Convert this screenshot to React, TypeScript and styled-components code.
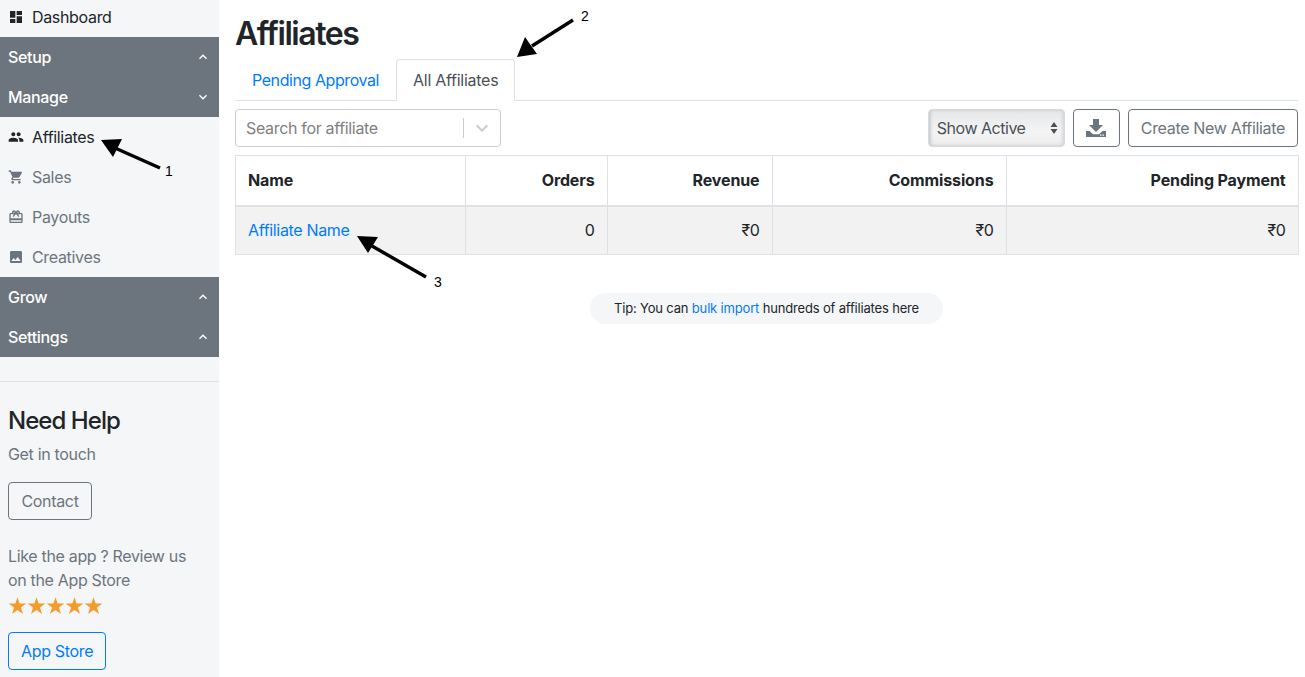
import React from "react";
import styled, { createGlobalStyle } from "styled-components";
import { MdDashboard, MdPeople, MdShoppingCart, MdRedeem, MdImage, MdKeyboardArrowUp, MdKeyboardArrowDown } from "react-icons/md";

const Global = createGlobalStyle`
  html, body { margin: 0; padding: 0; background: #fff; }
  body { font-family: Inter, "Liberation Sans", sans-serif; font-size: 16px; line-height: 24px; color: #212529; letter-spacing: -0.33px; overflow: hidden; }
  * { box-sizing: border-box; }
`;

const Page = styled.div`
  position: relative;
  display: flex;
  width: 1305px;
  height: 677px;
  overflow: hidden;
`;
const Sidebar = styled.aside`
  width: 219px;
  flex: none;
  background: #f5f6f8;
  display: flex;
  flex-direction: column;
`;
const NavItem = styled.div<{ $active?: boolean; $short?: boolean }>`
  height: ${p => (p.$short ? 37 : 40)}px;
  display: flex;
  align-items: center;
  gap: 8px;
  padding: ${p => (p.$short ? "0 0 3px 8px" : "0 0 0 8px")};
  color: ${p => (p.$active ? "#212529" : "#6c757d")};
  svg { flex: none; font-size: 16px; }
`;
const GroupHead = styled.div`
  height: 40px;
  background: #6c757d;
  color: #fff;
  font-weight: 500;
  display: flex;
  align-items: center;
  justify-content: space-between;
  padding: 0 8px;
  svg { font-size: 16px; }
`;
const Rule = styled.hr`
  border: 0;
  border-top: 1px solid #dfe1e4;
  margin: 24px 0 0;
`;
const Help = styled.div`
  padding: 24px 8px 0;
  color: #6c757d;
`;
const HelpTitle = styled.h4`
  margin: 0;
  font-size: 24px;
  line-height: 29px;
  font-weight: 500;
  color: #212529;
  letter-spacing: -0.95px;
`;
const HelpText = styled.p`
  margin: 7px 0 0;
`;
const OutlineButton = styled.button<{ $blue?: boolean }>`
  font: inherit;
  letter-spacing: inherit;
  height: 38px;
  padding: 0 12px;
  background: transparent;
  border: 1px solid ${p => (p.$blue ? "#007bff" : "#6c757d")};
  color: ${p => (p.$blue ? "#007bff" : "#6c757d")};
  border-radius: 4px;
  display: inline-flex;
  align-items: center;
  justify-content: center;
  flex: none;
`;
const ContactButton = styled(OutlineButton)`
  width: 84px;
  margin-top: 16px;
`;
const Review = styled.p`
  margin: 24px 0 0;
`;
const Stars = styled.div`
  display: flex;
  color: #f49c2b;
  margin: 4px 0 17px;
  svg { display: block; }
`;
const Main = styled.main`
  flex: 1;
  min-width: 0;
  padding: 0 7px 0 16px;
  display: flex;
  flex-direction: column;
`;
const Title = styled.h1`
  margin: 15px 0 0;
  font-size: 32px;
  line-height: 38px;
  font-weight: 600;
  letter-spacing: -1.45px;
`;
const Tabs = styled.div`
  display: flex;
  margin-top: 6px;
  height: 42px;
  border-bottom: 1px solid #dee2e6;
`;
const Tab = styled.div<{ $active?: boolean }>`
  height: 42px;
  padding: 0 16px;
  display: flex;
  align-items: center;
  border: 1px solid ${p => (p.$active ? "#dee2e6" : "transparent")};
  border-bottom-color: ${p => (p.$active ? "#fff" : "transparent")};
  border-radius: 4px 4px 0 0;
  color: ${p => (p.$active ? "#495057" : "#007bff")};
  letter-spacing: ${p => (p.$active ? "-0.27px" : "-0.42px")};
`;
const Toolbar = styled.div`
  display: flex;
  align-items: center;
  margin-top: 8px;
  height: 38px;
`;
const Search = styled.div`
  width: 266px;
  height: 38px;
  border: 1px solid #ccc;
  border-radius: 4px;
  display: flex;
  align-items: center;
  padding-left: 10px;
  color: #808080;
`;
const SearchText = styled.span`
  flex: 1;
`;
const SearchDivider = styled.span`
  width: 1px;
  height: 20px;
  background: #ccc;
`;
const SearchCaret = styled.span`
  width: 36px;
  display: flex;
  justify-content: center;
  color: #ccc;
  svg { font-size: 24px; }
`;
const Spacer = styled.div`
  flex: 1;
`;
const FilterSelect = styled.div`
  width: 137px;
  height: 38px;
  border: 1px solid #d8dbde;
  border-radius: 4px;
  background: linear-gradient(#e6e7e8, #f4f4f5 60%, #ececed);
  box-shadow: inset 2px 0 3px #c9cccf, inset -2px 0 3px #d6d8da;
  display: flex;
  align-items: center;
  justify-content: space-between;
  padding: 0 6px 0 8px;
  color: #495057;
  letter-spacing: -0.48px;
  margin-right: 8px;
`;
const IconButton = styled(OutlineButton)`
  width: 47px;
  padding: 0;
  margin-right: 8px;
`;
const Table = styled.table`
  border-collapse: collapse;
  margin-top: 8px;
  width: 1063px;
  table-layout: fixed;
`;
const Th = styled.th<{ $w: number; $left?: boolean }>`
  width: ${p => p.$w}px;
  height: 50px;
  border: 1px solid #dee2e6;
  border-bottom-width: 2px;
  padding: 0 12.5px 0 12px;
  text-align: ${p => (p.$left ? "left" : "right")};
  font-weight: 700;
  letter-spacing: -0.12px;
`;
const Td = styled.td<{ $left?: boolean }>`
  height: 49px;
  border: 1px solid #dee2e6;
  background: #f2f2f2;
  padding: 0 12.5px 0 12px;
  text-align: ${p => (p.$left ? "left" : "right")};
`;
const Link = styled.a`
  color: #007bff;
`;
const TipRow = styled.div`
  display: flex;
  justify-content: center;
  margin-top: 38px;
`;
const Tip = styled.div`
  width: 353px;
  height: 31px;
  border-radius: 16px;
  background: #f5f6f8;
  font-size: 13px;
  letter-spacing: -0.17px;
  padding-bottom: 1px;
  display: flex;
  align-items: center;
  justify-content: center;
  white-space: pre;
`;
const Annotations = styled.svg`
  position: absolute;
  inset: 0;
  pointer-events: none;
`;
const AnnotationNumber = styled.span<{ $x: number; $y: number }>`
  position: absolute;
  left: ${p => p.$x}px;
  top: ${p => p.$y}px;
  font-size: 14px;
  line-height: 16px;
  letter-spacing: 0;
  font-family: "Liberation Sans", Arial, sans-serif;
  color: #000;
`;

const Star = () => (
  <svg width="19" height="19" viewBox="0 0 24 24" fill="currentColor">
    <path d="M12 1.500l2.700 8h8.500l-6.900 5 2.700 8.200L12 17.600l-7 5.100 2.700-8.200-6.900-5h8.500z" />
  </svg>
);
const SortArrows = () => (
  <svg width="8" height="14" viewBox="0 0 8 14" fill="#495057">
    <path d="M4 1l3.500 5H.5zM4 13L.5 8h7z" />
  </svg>
);
const Arrow = ({ x1, y1, x2, y2, hx, hy, a, b }: { x1: number; y1: number; x2: number; y2: number; hx: number; hy: number; a: string; b: string }) => (
  <g>
    <line x1={x1} y1={y1} x2={x2} y2={y2} stroke="#000" strokeWidth="3.4" />
    <polygon points={`${hx},${hy} ${a} ${b}`} fill="#000" />
  </g>
);
const DownloadIcon = () => (
  <svg width="22" height="20" viewBox="0 0 22 20" fill="#6c757d">
    <path d="M8 1h6v6h4l-7 7-7-7h4z" />
    <path d="M1 13h3.500l3.500 3.200h6L17.500 13H21v6H1z" />
    <rect x="15" y="16.500" width="1.500" height="1.200" fill="#fff" />
    <rect x="17.500" y="16.500" width="1.500" height="1.200" fill="#fff" />
  </svg>
);

export default function App() {
  return (
    <Page>
      <Global />
      <Sidebar>
        <NavItem $active $short><MdDashboard />Dashboard</NavItem>
        <GroupHead>Setup<MdKeyboardArrowUp /></GroupHead>
        <GroupHead>Manage<MdKeyboardArrowDown /></GroupHead>
        <NavItem $active><MdPeople />Affiliates</NavItem>
        <NavItem><MdShoppingCart />Sales</NavItem>
        <NavItem><MdRedeem />Payouts</NavItem>
        <NavItem><MdImage />Creatives</NavItem>
        <GroupHead>Grow<MdKeyboardArrowUp /></GroupHead>
        <GroupHead>Settings<MdKeyboardArrowUp /></GroupHead>
        <Rule />
        <Help>
          <HelpTitle>Need Help</HelpTitle>
          <HelpText>Get in touch</HelpText>
          <ContactButton>Contact</ContactButton>
          <Review>Like the app ? Review us<br />on the App Store</Review>
          <Stars><Star /><Star /><Star /><Star /><Star /></Stars>
          <OutlineButton $blue>App Store</OutlineButton>
        </Help>
      </Sidebar>
      <Main>
        <Title>Affiliates</Title>
        <Tabs>
          <Tab>Pending Approval</Tab>
          <Tab $active>All Affiliates</Tab>
        </Tabs>
        <Toolbar>
          <Search>
            <SearchText>Search for affiliate</SearchText>
            <SearchDivider />
            <SearchCaret><MdKeyboardArrowDown /></SearchCaret>
          </Search>
          <Spacer />
          <FilterSelect>Show Active<SortArrows /></FilterSelect>
          <IconButton><DownloadIcon /></IconButton>
          <OutlineButton>Create New Affiliate</OutlineButton>
        </Toolbar>
        <Table>
          <thead>
            <tr>
              <Th $w={230} $left>Name</Th>
              <Th $w={142}>Orders</Th>
              <Th $w={165}>Revenue</Th>
              <Th $w={234}>Commissions</Th>
              <Th $w={292}>Pending Payment</Th>
            </tr>
          </thead>
          <tbody>
            <tr>
              <Td $left><Link>Affiliate Name</Link></Td>
              <Td>0</Td>
              <Td>₹0</Td>
              <Td>₹0</Td>
              <Td>₹0</Td>
            </tr>
          </tbody>
        </Table>
        <TipRow>
          <Tip>Tip: You can <Link>bulk import</Link> hundreds of affiliates here</Tip>
        </TipRow>
      </Main>
      <Annotations width="1305" height="677" viewBox="0 0 1305 677">
        <Arrow x1={160} y1={168} x2={115} y2={148} hx={101} hy={140} a="122,139" b="113,157" />
        <Arrow x1={573} y1={20} x2={532} y2={46} hx={517} hy={57} a="525,37" b="537,54" />
        <Arrow x1={426} y1={277} x2={372} y2={246} hx={357} hy={236} a="378,237" b="368,253" />
      </Annotations>
      <AnnotationNumber $x={165} $y={163}>1</AnnotationNumber>
      <AnnotationNumber $x={581} $y={8}>2</AnnotationNumber>
      <AnnotationNumber $x={434} $y={274}>3</AnnotationNumber>
    </Page>
  );
}
